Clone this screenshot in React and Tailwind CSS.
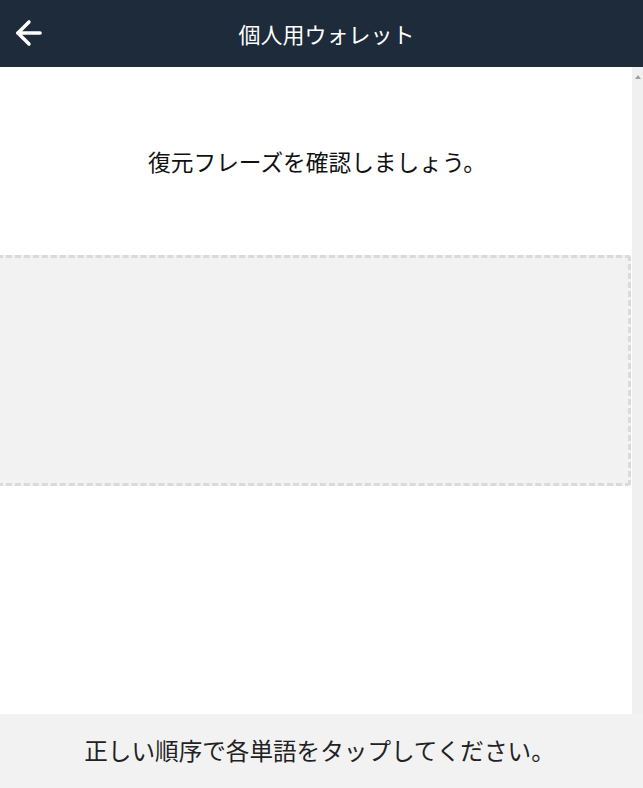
import { ArrowLeft } from "lucide-react"

export default function App() {
  return (
    <div
      className="h-[788px] w-[643px] flex flex-col overflow-hidden bg-white"
      style={{ fontFamily: '"Noto Sans CJK JP", "Noto Sans", sans-serif' }}
    >
      <header className="h-[67px] shrink-0 bg-[#1d2b3b] flex items-center relative">
        <button className="absolute left-[10px] top-[14px] text-white">
          <ArrowLeft size={38} strokeWidth={2.2} />
        </button>
        <h1 className="w-full text-center text-white text-[22px] font-normal pl-[10px]">
          個人用ウォレット
        </h1>
      </header>

      <div className="flex-1 flex min-h-0">
        <main className="flex-1 overflow-hidden">
          <p className="mt-[78px] text-center text-[22.7px] text-[#111] pl-[2px]">
            復元フレーズを確認しましょう。
          </p>
          <div className="mt-[76px] -ml-[12px] mr-[1px] h-[231px] bg-[#f2f2f2] border-[3px] border-dashed border-[#dadada] rounded-[3px]" />
        </main>
        <div className="w-[11px] bg-[#f0f0f0] flex justify-center pt-[8px]">
          <div className="w-0 h-0 border-l-[3px] border-r-[3px] border-b-[4px] border-l-transparent border-r-transparent border-b-[#a0a0a0]" />
        </div>
      </div>

      <footer className="h-[74px] shrink-0 bg-[#f2f2f2] flex items-center justify-center">
        <p className="text-[23.6px] text-[#222] pr-[4px]">
          正しい順序で各単語をタップしてください。
        </p>
      </footer>
    </div>
  )
}
